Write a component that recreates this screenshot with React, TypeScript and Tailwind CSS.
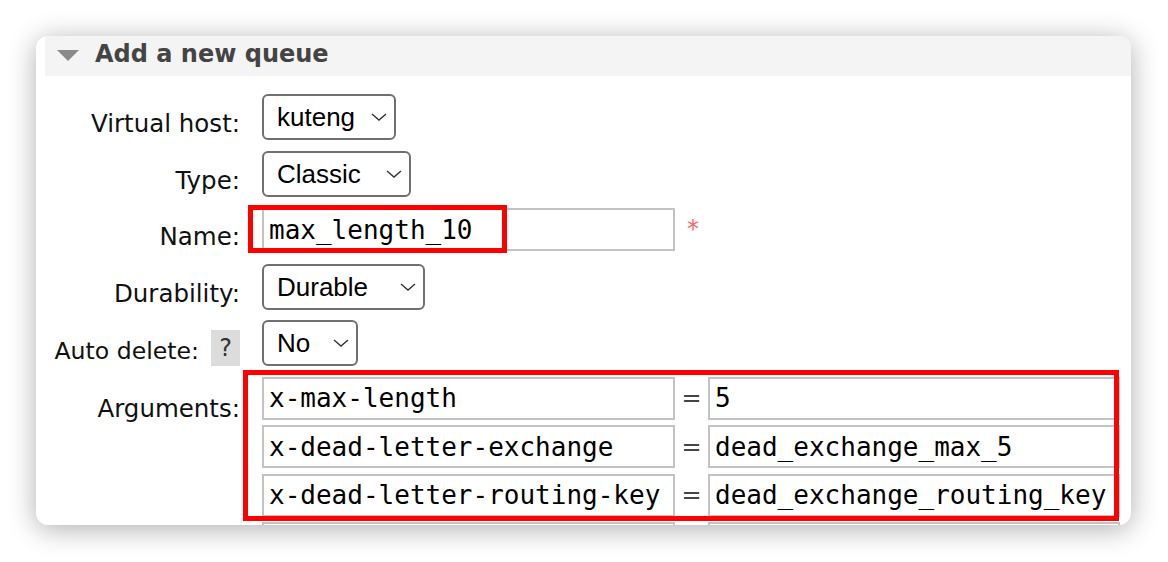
import React from "react"

// Fake native selects: macOS sizes each select to its widest option, so widths are fixed here
function Select({ value, width }: { value: string; width: string }) {
  return (
    <div
      className={`${width} h-[46px] flex items-center justify-between border-2 border-[#707070] rounded-[6px] bg-white pl-[13px] pr-[7px] font-['Liberation_Sans',Arial,sans-serif] text-[26px] leading-none text-black`}
    >
      <span>{value}</span>
      <svg width="16" height="8" viewBox="0 0 16 8" fill="none">
        <polyline points="1,1 8,7 15,1" stroke="#333" strokeWidth="1.4" />
      </svg>
    </div>
  )
}

function TextBox({ value, width }: { value: string; width: string }) {
  return (
    <div
      className={`${width} h-[43px] flex items-center border-2 border-[#c3c3c3] bg-white pl-[5px] font-['DejaVu_Sans_Mono',monospace] text-[26px] leading-none text-black whitespace-nowrap overflow-hidden`}
    >
      {value}
    </div>
  )
}

function Row({ label, children, extra }: { label: React.ReactNode; children: React.ReactNode; extra?: boolean }) {
  return (
    <div className="flex items-start h-[56.5px]">
      <div className={`w-[204px] flex justify-end items-center ${extra ? "pt-[10px]" : "pt-[16px]"} text-[24.5px] leading-[28px] text-[#111]`}>
        {label}
      </div>
      <div className="ml-[22px]">{children}</div>
    </div>
  )
}

const args = [
  ["x-max-length", "5"],
  ["x-dead-letter-exchange", "dead_exchange_max_5"],
  ["x-dead-letter-routing-key", "dead_exchange_routing_key"],
  ["", ""],
]

export default function App() {
  return (
    <div className="w-[1168px] h-[562px] bg-white overflow-hidden pt-[36px] pl-[36px] font-['DejaVu_Sans',Verdana,sans-serif]">
      <div className="relative w-[1095px] h-[489px] rounded-[12px] bg-white overflow-hidden shadow-[0_4px_28px_rgba(0,0,0,0.32)]">
        {/* Header */}
        <div className="ml-[9px] h-[40px] bg-[#f4f4f4] flex items-center pl-[12px] gap-[16px] pb-[4px]">
          <svg width="22" height="11" viewBox="0 0 22 11" className="mt-[3px]">
            <polygon points="0,0 22,0 11,11" fill="#8a8a8a" />
          </svg>
          <span className="text-[24px] leading-[28px] font-bold text-[#444]">Add a new queue</span>
        </div>

        {/* Form */}
        <div className="pt-[18px] flex flex-col">
          <Row label="Virtual host:">
            <Select value="kuteng" width="w-[134px]" />
          </Row>
          <Row label="Type:">
            <Select value="Classic" width="w-[149px]" />
          </Row>
          <Row label="Name:">
            <div className="flex items-center mt-[1px]">
              <TextBox value="max_length_10" width="w-[413px]" />
              <span className="ml-[12px] pb-[2px] text-[24px] leading-[28px] text-[#f66]">*</span>
            </div>
          </Row>
          <Row label="Durability:">
            <Select value="Durable" width="w-[163px]" />
          </Row>
          <Row
            extra
            label={
              <>
                <span className="pt-[6px] text-[23.6px]">Auto delete:</span>
                <span className="ml-[12px] w-[29px] h-[36px] flex items-center justify-center bg-[#dcdcdc] text-[#333] text-[24px]">?</span>
              </>
            }
          >
            <Select value="No" width="w-[96px]" />
          </Row>
          <div className="flex items-start">
            <div className="w-[204px] flex justify-end pt-[18px] text-[24.5px] leading-[28px] text-[#111]">Arguments:</div>
            <div className="ml-[22px] flex flex-col gap-[5.5px]">
              {args.map(([k, v], i) => (
                <div key={i} className="flex items-center">
                  <TextBox value={k} width="w-[413px]" />
                  <span className="w-[33px] text-center text-[24px] leading-[28px] text-[#444]">{k ? "=" : ""}</span>
                  <TextBox value={v} width="w-[412px]" />
                </div>
              ))}
            </div>
          </div>
        </div>

        {/* Red annotation boxes */}
        <div className="absolute left-[212px] top-[169px] w-[259px] h-[48px] border-[5px] border-[#ff0000]" />
        <div className="absolute left-[207px] top-[334px] w-[876px] h-[151px] border-[5px] border-[#ff0000]" />
      </div>
    </div>
  )
}
